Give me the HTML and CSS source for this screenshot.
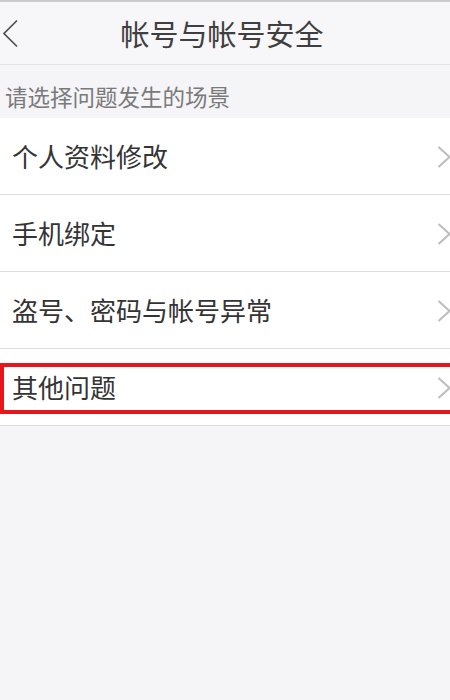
FILE: index.html
```html
<!DOCTYPE html>
<html lang="zh-CN">
<head>
<meta charset="utf-8">
<title>帐号与帐号安全</title>
<link rel="stylesheet" href="styles.css">
</head>
<body>
<header class="topbar">
  <span class="back">
    <svg width="16" height="29" viewBox="0 0 16 29"><polyline points="15,1.5 2,14.5 15,27.5" fill="none" stroke="#4f4f4f" stroke-width="1.7"/></svg>
  </span>
  <h1 class="title">帐号与帐号安全</h1>
  <span class="spacer"></span>
</header>
<div class="section-label">请选择问题发生的场景</div>
<ul class="list">
  <li class="row"><span class="label">个人资料修改</span><svg class="chev" width="14" height="22" viewBox="0 0 14 22"><polyline points="1.5,1 12.5,11 1.5,21" fill="none" stroke="#bdbdbd" stroke-width="2"/></svg></li>
  <li class="row"><span class="label">手机绑定</span><svg class="chev" width="14" height="22" viewBox="0 0 14 22"><polyline points="1.5,1 12.5,11 1.5,21" fill="none" stroke="#bdbdbd" stroke-width="2"/></svg></li>
  <li class="row"><span class="label">盗号、密码与帐号异常</span><svg class="chev" width="14" height="22" viewBox="0 0 14 22"><polyline points="1.5,1 12.5,11 1.5,21" fill="none" stroke="#bdbdbd" stroke-width="2"/></svg></li>
  <li class="row highlighted"><span class="label">其他问题</span><svg class="chev" width="14" height="22" viewBox="0 0 14 22"><polyline points="1.5,1 12.5,11 1.5,21" fill="none" stroke="#bdbdbd" stroke-width="2"/></svg><span class="mark"></span></li>
</ul>
</body>
</html>
```
FILE: styles.css
```css
html, body {
  margin: 0;
  padding: 0;
  background: #f5f4f7;
  font-family: "Noto Sans CJK SC", "Noto Sans", sans-serif;
  overflow: hidden;
}
.topbar {
  display: grid;
  grid-template-columns: 1fr auto 1fr;
  align-items: center;
  height: 62px;
  background: #f7f6f9;
  border-top: 2px solid #cacaca;
  border-bottom: 1px solid #e3e2e6;
}
.back {
  display: flex;
  align-items: center;
  padding-left: 2px;
  margin-top: 1px;
}
.title {
  margin: 0;
  font-size: 29px;
  font-weight: normal;
  line-height: 29px;
  color: #3f3f3f;
  letter-spacing: 0;
  margin-right: 6px;
}
.section-label {
  padding: 20px 0 11px 5px;
  font-size: 22.5px;
  line-height: 22px;
  color: #7a7a7a;
}
.list {
  list-style: none;
  margin: 0;
  padding: 0;
  background: #ffffff;
}
.row {
  position: relative;
  display: flex;
  align-items: center;
  justify-content: space-between;
  height: 76px;
  padding-left: 12px;
  border-bottom: 1px solid #dedede;
  box-sizing: content-box;
}
.label {
  font-size: 26px;
  line-height: 26px;
  color: #343434;
}
.chev {
  margin-right: -1px;
  margin-top: 2px;
}
.mark {
  position: absolute;
  left: 0;
  right: -10px;
  top: 14px;
  height: 43px;
  border: 4.5px solid #e8161b;
  pointer-events: none;
}
```
